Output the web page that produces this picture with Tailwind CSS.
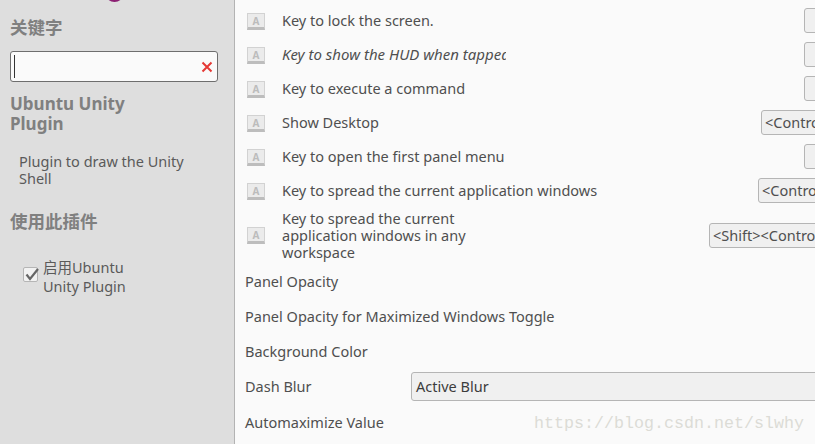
<!DOCTYPE html>
<html lang="zh">
<head>
    <meta charset="UTF-8">
    <title>Ubuntu Unity Plugin</title>
    <script src="https://cdn.jsdelivr.net/npm/@tailwindcss/browser@4"></script>
</head>
<body class="w-[815px] h-[444px] overflow-hidden relative bg-[#fafafa] text-[#4f4f4f] text-[14.5px] font-['Noto_Sans','Noto_Sans_CJK_SC',sans-serif]">
    <div class="flex h-[444px] w-[815px] overflow-hidden">
        <!-- sidebar -->
        <aside class="w-[235px] shrink-0 h-full bg-[#dedede] border-r border-[#b3b3b3] pl-[10px] relative">
            <div class="absolute left-[105px] -top-[17px] w-[19px] h-[19px] rounded-full bg-[#8b1f72]"></div>
            <h2 class="pt-[16px] h-[51px] text-[17.5px] leading-[22px] font-bold text-[#808080]">关键字</h2>
            <div class="w-[208px] h-[31px] bg-[#fafafa] border border-[#6e6e6e] rounded-[3px] flex items-center justify-between pl-[3px] pr-[3px]">
                <span class="w-px h-[23px] bg-[#333]"></span>
                <svg width="14" height="14" viewBox="0 0 14 14"><path d="M2.5 2.5 L11.5 11.5 M11.5 2.5 L2.5 11.5" stroke="#e53935" stroke-width="2"/></svg>
            </div>
            <h2 class="mt-[12px] w-[130px] text-[17px] leading-[20px] font-bold text-[#808080]">Ubuntu Unity Plugin</h2>
            <p class="mt-[19px] ml-[9px] w-[190px] leading-[17px] text-[#5a5a5a]">Plugin to draw the Unity Shell</p>
            <h2 class="mt-[23px] text-[17.5px] leading-[22px] font-bold text-[#808080]">使用此插件</h2>
            <label class="mt-[26px] ml-[13px] flex items-start gap-[5px]">
                <span class="relative mt-[9px] w-[15px] h-[15px] shrink-0 bg-[#f2f2f2] border border-[#b5b5b5] rounded-[2px]">
                    <svg class="absolute -top-[2px] left-0" width="16" height="16" viewBox="0 0 16 16"><path d="M2.5 8.5 L6 13 L14 3" fill="none" stroke="#666" stroke-width="2.2"/></svg>
                </span>
                <span class="w-[100px] leading-[19px] text-[#5a5a5a]">启用Ubuntu Unity Plugin</span>
            </label>
        </aside>

        <!-- settings list -->
        <main class="flex-1 min-w-0 pt-[8px] pl-[12px] flex flex-col">
            <div class="flex items-center h-[25px] mb-[9px]">
                <span class="mt-[2px] w-[18px] h-[17px] shrink-0 bg-[#ebebeb] border border-[#d2d2d2] border-b-[3px] border-b-[#bdbdbd] text-[10px] leading-[14px] font-bold text-[#bcbcbc] text-center">A</span>
                <span class="ml-[17px]">Key to lock the screen.</span>
                <span class="ml-auto -mr-[10px] w-[21px] h-[25px] bg-[#f0f0f0] border border-[#b5b5b5] rounded-[3px]"></span>
            </div>
            <div class="flex items-center h-[25px] mb-[9px]">
                <span class="mt-[2px] w-[18px] h-[17px] shrink-0 bg-[#ebebeb] border border-[#d2d2d2] border-b-[3px] border-b-[#bdbdbd] text-[10px] leading-[14px] font-bold text-[#bcbcbc] text-center">A</span>
                <span class="ml-[17px] w-[224px] overflow-hidden whitespace-nowrap italic text-[15px]">Key to show the HUD when tapped</span>
                <span class="ml-auto -mr-[10px] w-[21px] h-[25px] bg-[#f0f0f0] border border-[#b5b5b5] rounded-[3px]"></span>
            </div>
            <div class="flex items-center h-[25px] mb-[9px]">
                <span class="mt-[2px] w-[18px] h-[17px] shrink-0 bg-[#ebebeb] border border-[#d2d2d2] border-b-[3px] border-b-[#bdbdbd] text-[10px] leading-[14px] font-bold text-[#bcbcbc] text-center">A</span>
                <span class="ml-[17px]">Key to execute a command</span>
                <span class="ml-auto -mr-[10px] w-[21px] h-[25px] bg-[#f0f0f0] border border-[#b5b5b5] rounded-[3px]"></span>
            </div>
            <div class="flex items-center h-[25px] mb-[9px]">
                <span class="mt-[2px] w-[18px] h-[17px] shrink-0 bg-[#ebebeb] border border-[#d2d2d2] border-b-[3px] border-b-[#bdbdbd] text-[10px] leading-[14px] font-bold text-[#bcbcbc] text-center">A</span>
                <span class="ml-[17px]">Show Desktop</span>
                <span class="ml-auto -mr-[10px] w-[64px] h-[25px] pl-[3px] leading-[23px] overflow-hidden whitespace-nowrap bg-[#f0f0f0] border border-[#b5b5b5] rounded-[3px]">&lt;Control&gt;</span>
            </div>
            <div class="flex items-center h-[25px] mb-[9px]">
                <span class="mt-[2px] w-[18px] h-[17px] shrink-0 bg-[#ebebeb] border border-[#d2d2d2] border-b-[3px] border-b-[#bdbdbd] text-[10px] leading-[14px] font-bold text-[#bcbcbc] text-center">A</span>
                <span class="ml-[17px]">Key to open the first panel menu</span>
                <span class="ml-auto -mr-[10px] w-[21px] h-[25px] bg-[#f0f0f0] border border-[#b5b5b5] rounded-[3px]"></span>
            </div>
            <div class="flex items-center h-[25px] mb-[7px]">
                <span class="mt-[2px] w-[18px] h-[17px] shrink-0 bg-[#ebebeb] border border-[#d2d2d2] border-b-[3px] border-b-[#bdbdbd] text-[10px] leading-[14px] font-bold text-[#bcbcbc] text-center">A</span>
                <span class="ml-[17px]">Key to spread the current application windows</span>
                <span class="ml-auto -mr-[10px] w-[67px] h-[25px] pl-[3px] leading-[23px] overflow-hidden whitespace-nowrap bg-[#f0f0f0] border border-[#b5b5b5] rounded-[3px]">&lt;Control&gt;</span>
            </div>
            <div class="flex items-center h-[51px] mb-[6px]">
                <span class="w-[18px] h-[17px] shrink-0 bg-[#ebebeb] border border-[#d2d2d2] border-b-[3px] border-b-[#bdbdbd] text-[10px] leading-[14px] font-bold text-[#bcbcbc] text-center">A</span>
                <span class="ml-[17px] w-[195px] leading-[17px]">Key to spread the current application windows in any workspace</span>
                <span class="ml-auto -mr-[10px] w-[116px] h-[25px] pl-[3px] leading-[23px] overflow-hidden whitespace-nowrap bg-[#f0f0f0] border border-[#b5b5b5] rounded-[3px]">&lt;Shift&gt;&lt;Control&gt;</span>
            </div>
            <div class="-ml-[2px] flex items-center h-[29px] mb-[6px]">Panel Opacity</div>
            <div class="-ml-[2px] flex items-center h-[29px] mb-[6px]">Panel Opacity for Maximized Windows Toggle</div>
            <div class="-ml-[2px] flex items-center h-[29px] mb-[6px]">Background Color</div>
            <div class="-ml-[2px] flex items-center h-[29px] mb-[7px]">
                <span class="w-[166px] shrink-0">Dash Blur</span>
                <span class="w-[420px] shrink-0 h-[29px] pl-[4px] leading-[27px] bg-[#f0f0f0] border border-[#b5b5b5] rounded-[3px] text-[#3c3c3c]">Active Blur</span>
            </div>
            <div class="-ml-[2px] flex items-center h-[29px]">Automaximize Value</div>
        </main>
    </div>
    <!-- watermark -->
    <div class="absolute left-[534px] top-[414px] text-[16.67px] leading-[20px] whitespace-nowrap text-[#dcdcd6] font-['Liberation_Mono',monospace]">https://blog.csdn.net/slwhy</div>
</body>
</html>
